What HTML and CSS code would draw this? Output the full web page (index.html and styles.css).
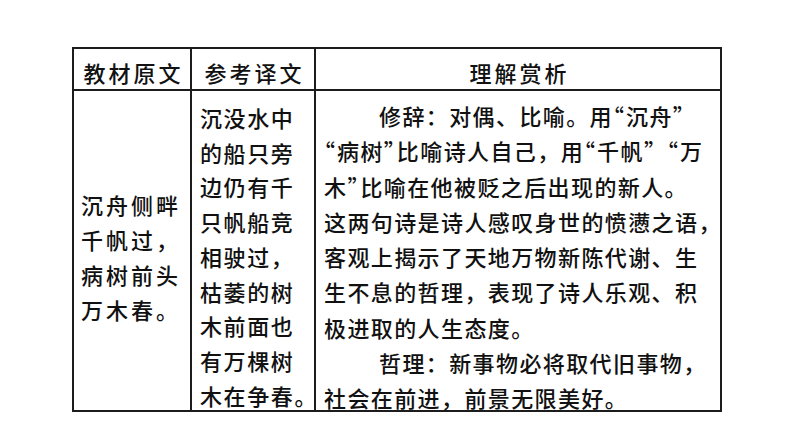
FILE: index.html
```html
<!DOCTYPE html>
<html lang="zh-CN">
<head>
<meta charset="utf-8">
<title>理解赏析</title>
<link rel="stylesheet" href="styles.css">
</head>
<body>
<main class="page">
  <div class="tbl">
    <div class="cell head h1">教材原文</div>
    <div class="cell head h2">参考译文</div>
    <div class="cell head h3">理解赏析</div>
    <div class="cell c1"><p>沉舟侧畔<br>千帆过，<br>病树前头<br>万木春。</p></div>
    <div class="cell c2"><p>沉没水中<br>的船只旁<br>边仍有千<br>只帆船竞<br>相驶过，<br>枯萎的树<br>木前面也<br>有万棵树<br>木在争春。</p></div>
    <div class="cell c3">
      <p class="ind">修辞：对偶、比喻。用<span class="q">“</span>沉舟<span class="q">”</span></p>
      <p><span class="q">“</span>病树<span class="q">”</span>比喻诗人自己，用<span class="q">“</span>千帆<span class="q">”</span><span class="gap"></span><span class="q">“</span>万</p>
      <p>木<span class="q">”</span>比喻在他被贬之后出现的新人。</p>
      <p>这两句诗是诗人感叹身世的愤懑之语，</p>
      <p>客观上揭示了天地万物新陈代谢、生</p>
      <p>生不息的哲理，表现了诗人乐观、积</p>
      <p>极进取的人生态度。</p>
      <p class="ind">哲理：新事物必将取代旧事物，</p>
      <p>社会在前进，前景无限美好。</p>
    </div>
  </div>
</main>
</body>
</html>
```
FILE: styles.css
```css
html, body {
  margin: 0;
  padding: 0;
  background: #ffffff;
}

.page {
  padding: 47px 0 0 72px;
  font-family: "Noto Sans CJK SC", "Noto Sans CJK JP", sans-serif;
  font-size: 22px;
  font-weight: 500;
  color: #111111;
}

.tbl {
  display: grid;
  grid-template-columns: 116px 122px 404px;
  grid-template-rows: 40px 319px;
  gap: 2px;
  padding: 2px;
  width: max-content;
  background: #1c1c1c;
}

.cell {
  background: #ffffff;
  line-height: 35px;
  white-space: nowrap;
}

.cell p {
  margin: 0;
  height: 35px;
}

.c1 p,
.c2 p {
  height: auto;
}

.head {
  display: flex;
  align-items: center;
  justify-content: center;
  padding-top: 7px;
  letter-spacing: 3px;
  text-indent: 3px;
}

.c1 {
  display: flex;
  align-items: center;
  padding: 12px 0 0 7px;
  letter-spacing: 3px;
}

.c2 {
  padding: 9px 0 0 8px;
  line-height: 34.7px;
  letter-spacing: 1.6px;
}

.c3 {
  padding: 7px 0 0 8px;
  letter-spacing: 1.4px;
}

.c3 p {
  height: 35.3px;
  line-height: 35.3px;
}

.ind {
  text-indent: 55px;
}

.q {
  font-feature-settings: "halt" 1;
  letter-spacing: 2px;
}

.gap {
  display: inline-block;
  width: 10px;
}
```
